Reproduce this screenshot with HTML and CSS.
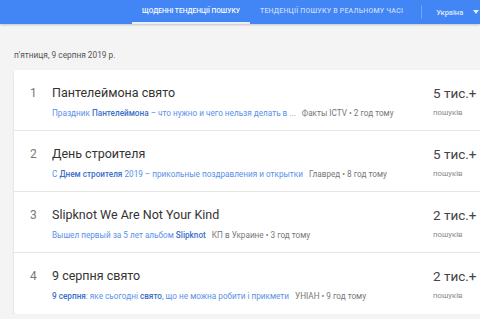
FILE: index.html
```html
<!DOCTYPE html>
<html lang="uk">
<head>
  <meta charset="UTF-8">
  <title>Тенденції пошуку</title>
  <link rel="stylesheet" href="styles.css">
</head>
<body>

  <!-- Top bar with tabs -->
  <div class="top-bar">
    <div class="tab tab-active">Щоденні тенденції пошуку</div>
    <div class="tab">Тенденції пошуку в реальному часі</div>
    <div class="divider"></div>
    <div class="region">Україна <span class="arrow"></span></div>
  </div>

  <div class="page">
    <div class="date">п'ятниця, 9 серпня 2019 р.</div>

    <div class="feed">
      <div class="feed-item">
        <div class="rank">1</div>
        <div class="details">
          <div class="title">Пантелеймона свято</div>
          <div class="summary">
            <span class="link">Праздник <b>Пантелеймона</b> – что нужно и чего нельзя делать в ...</span>
            <span class="source">Факты ICTV • 2 год тому</span>
          </div>
        </div>
        <div class="count">
          <div class="count-value">5 тис.+</div>
          <div class="count-label">пошуків</div>
        </div>
      </div>

      <div class="feed-item">
        <div class="rank">2</div>
        <div class="details">
          <div class="title">День строителя</div>
          <div class="summary">
            <span class="link">С <b>Днем строителя</b> 2019 – прикольные поздравления и открытки</span>
            <span class="source">Главред • 8 год тому</span>
          </div>
        </div>
        <div class="count">
          <div class="count-value">5 тис.+</div>
          <div class="count-label">пошуків</div>
        </div>
      </div>

      <div class="feed-item">
        <div class="rank">3</div>
        <div class="details">
          <div class="title">Slipknot We Are Not Your Kind</div>
          <div class="summary">
            <span class="link">Вышел первый за 5 лет альбом <b>Slipknot</b></span>
            <span class="source">КП в Украине • 3 год тому</span>
          </div>
        </div>
        <div class="count">
          <div class="count-value">2 тис.+</div>
          <div class="count-label">пошуків</div>
        </div>
      </div>

      <div class="feed-item">
        <div class="rank">4</div>
        <div class="details">
          <div class="title">9 серпня свято</div>
          <div class="summary">
            <span class="link"><b>9 серпня</b>: яке сьогодні <b>свято</b>, що не можна робити і прикмети</span>
            <span class="source">УНІАН • 9 год тому</span>
          </div>
        </div>
        <div class="count">
          <div class="count-value">2 тис.+</div>
          <div class="count-label">пошуків</div>
        </div>
      </div>
    </div>
  </div>

</body>
</html>
```

FILE: styles.css
```css
/* Global Styles */
body {
  font-family: Roboto, 'Liberation Sans', sans-serif;
  background-color: #f4f4f4;
  margin: 0;
  padding: 0;
  overflow: hidden;
}

/* Top bar */
.top-bar {
  display: flex;
  align-items: stretch;
  height: 24px;
  padding-left: 132px;
  background-color: #4285f4;
  box-shadow: 0 1px 2px rgba(0, 0, 0, 0.2);
}

.tab {
  display: flex;
  align-items: center;
  padding: 0 10px;
  font-size: 7px;
  font-weight: 500;
  text-transform: uppercase;
  color: rgba(255, 255, 255, 0.7);
  white-space: nowrap;
  border-bottom: 2px solid transparent;
  letter-spacing: 0.2px;
}

.tab-active {
  color: #fff;
  font-size: 6.7px;
  letter-spacing: 0;
  border-bottom-color: #e8eefc;
}

.divider {
  width: 1px;
  margin: 5px 0 5px 8px;
  background-color: rgba(255, 255, 255, 0.25);
}

.region {
  display: flex;
  align-items: center;
  gap: 10px;
  padding-left: 14px;
  font-size: 7.5px;
  font-weight: 500;
  color: rgba(255, 255, 255, 0.85);
  white-space: nowrap;
}

.arrow {
  width: 0;
  height: 0;
  border-left: 3px solid transparent;
  border-right: 3px solid transparent;
  border-top: 4px solid rgba(255, 255, 255, 0.85);
}

/* Page */
.page {
  padding: 26px 0 0 14px;
}

.date {
  font-size: 8.3px;
  color: #555;
  margin-bottom: 10px;
}

/* Trends feed */
.feed {
  background-color: #fff;
  box-shadow: 0 1px 2px rgba(0, 0, 0, 0.15);
  border-radius: 2px 0 0 2px;
}

.feed-item {
  display: flex;
  height: 61px;
  box-sizing: border-box;
  padding-top: 15px;
  border-bottom: 1px solid #e6e6e6;
}

.feed-item:last-child {
  border-bottom: none;
}

.rank {
  width: 38px;
  padding-left: 16px;
  box-sizing: border-box;
  font-size: 12px;
  line-height: 16px;
  color: #777;
}

.details {
  flex: 1;
  min-width: 0;
}

.title {
  font-size: 12.5px;
  line-height: 16px;
  color: #333;
  margin-bottom: 7px;
}

.summary {
  font-size: 8.2px;
  line-height: 10px;
  white-space: nowrap;
}

.link {
  color: #5b8fe8;
}

.link b {
  color: #3b6fc9;
  font-weight: 500;
}

.source {
  color: #777;
  margin-left: 4px;
}

.count {
  width: 47px;
}

.count-value {
  font-size: 13.5px;
  line-height: 16px;
  color: #444;
  margin-bottom: 7px;
}

.count-label {
  font-size: 7.8px;
  line-height: 10px;
  color: #888;
}
```
